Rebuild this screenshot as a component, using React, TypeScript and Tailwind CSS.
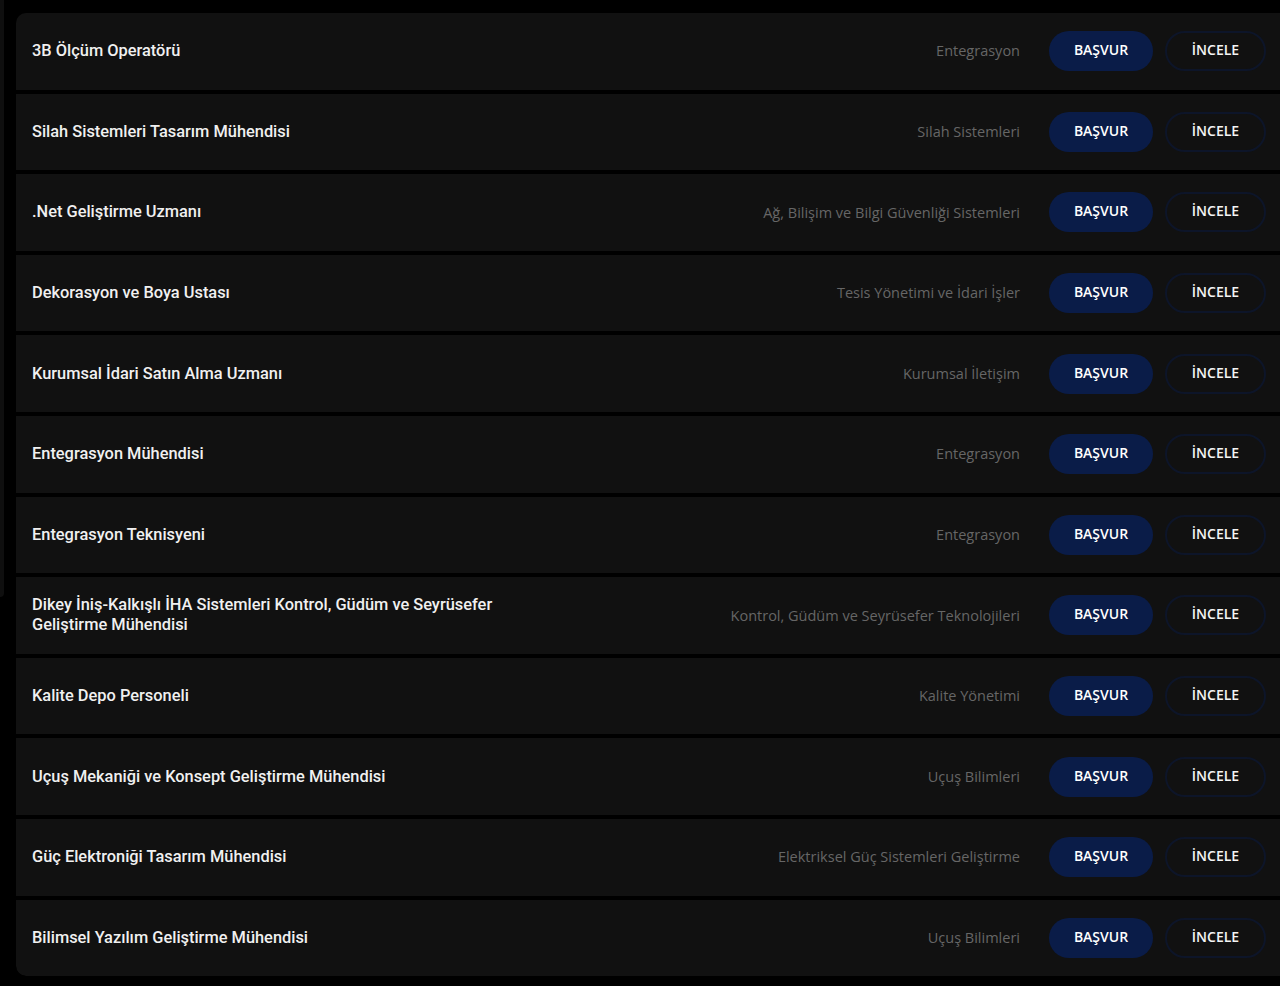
const jobs = [
    { title: '3B Ölçüm Operatörü', unit: 'Entegrasyon' },
    { title: 'Silah Sistemleri Tasarım Mühendisi', unit: 'Silah Sistemleri' },
    { title: '.Net Geliştirme Uzmanı', unit: 'Ağ, Bilişim ve Bilgi Güvenliği Sistemleri' },
    { title: 'Dekorasyon ve Boya Ustası', unit: 'Tesis Yönetimi ve İdari İşler' },
    { title: 'Kurumsal İdari Satın Alma Uzmanı', unit: 'Kurumsal İletişim' },
    { title: 'Entegrasyon Mühendisi', unit: 'Entegrasyon' },
    { title: 'Entegrasyon Teknisyeni', unit: 'Entegrasyon' },
    {
        title: 'Dikey İniş-Kalkışlı İHA Sistemleri Kontrol, Güdüm ve Seyrüsefer Geliştirme Mühendisi',
        unit: 'Kontrol, Güdüm ve Seyrüsefer Teknolojileri',
    },
    { title: 'Kalite Depo Personeli', unit: 'Kalite Yönetimi' },
    { title: 'Uçuş Mekaniği ve Konsept Geliştirme Mühendisi', unit: 'Uçuş Bilimleri' },
    { title: 'Güç Elektroniği Tasarım Mühendisi', unit: 'Elektriksel Güç Sistemleri Geliştirme' },
    { title: 'Bilimsel Yazılım Geliştirme Mühendisi', unit: 'Uçuş Bilimleri' },
];

export default function App() {
    return (
        <div className="min-h-[986px] bg-black flex items-start">
            {/* Side panel edge */}
            <div className="w-[4px] h-[597px] bg-[#0f0f0f] rounded-br-[4px] shrink-0" />

            {/* Job list */}
            <div className="flex-1 ml-[12px] pt-[13px] flex flex-col gap-[4px] rounded-l-[10px] overflow-hidden">
                {jobs.map((job, i) => (
                    <div
                        key={i}
                        className={`h-[76.6px] bg-[#111111] flex items-center pl-4 pr-[14px] ${
                            i === 0 ? 'rounded-tl-[10px]' : ''
                        } ${i === jobs.length - 1 ? 'rounded-bl-[10px]' : ''}`}
                    >
                        <h3
                            className="max-w-[480px] text-[16.4px] leading-5 font-medium text-[#f0f0f0]"
                            style={{ fontFamily: 'Roboto, "Noto Sans", sans-serif' }}
                        >
                            {job.title}
                        </h3>

                        <span
                            className="ml-auto text-[14.5px] text-[#666666]"
                            style={{ fontFamily: '"Open Sans", "Noto Sans", sans-serif' }}
                        >
                            {job.unit}
                        </span>

                        <div
                            className="flex items-center gap-[12px] ml-[29px]"
                            style={{ fontFamily: '"Open Sans", "Noto Sans", sans-serif' }}
                        >
                            <button className="w-[104px] h-[40px] pb-[3px] rounded-full bg-[#0a1c48] text-white text-[14px] font-semibold">
                                BAŞVUR
                            </button>
                            <button className="w-[101px] h-[40px] pb-[3px] rounded-full border-2 border-[#0d1529] bg-transparent text-[#f4f4f4] text-[14px] font-semibold">
                                İNCELE
                            </button>
                        </div>
                    </div>
                ))}
            </div>
        </div>
    );
}
